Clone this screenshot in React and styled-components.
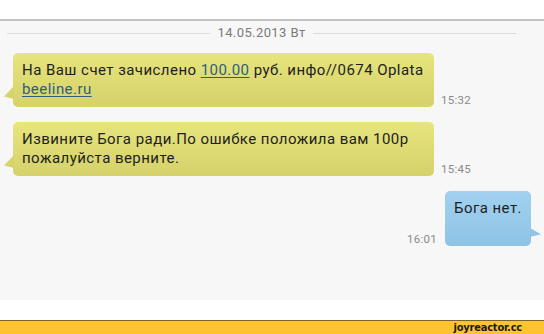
import React from 'react';
import styled, { createGlobalStyle } from 'styled-components';

const GlobalStyle = createGlobalStyle`
  html, body {
    margin: 0;
    padding: 0;
    background: #ffffff;
  }
  body {
    font-family: Roboto, "Liberation Sans", sans-serif;
  }
`;

const Page = styled.div`
  width: 544px;
  height: 334px;
  display: flex;
  flex-direction: column;
  overflow: hidden;
`;

const TopSpace = styled.div`
  height: 19px;
  background: #ffffff;
`;

const Thread = styled.div`
  height: 279px;
  border-top: 2px solid #c2c2c2;
  background: #f7f7f7;
  display: flex;
  flex-direction: column;
`;

const DateRow = styled.div`
  display: flex;
  align-items: center;
  gap: 7px;
  padding: 5px 28px 0 7px;
  height: 14px;
`;

const Rule = styled.div`
  flex: 1;
  height: 1px;
  background: #dcdcdc;
`;

const DateLabel = styled.span`
  font-size: 13px;
  letter-spacing: 0.4px;
  color: #7a7a7a;
  line-height: 14px;
`;

const Row = styled.div`
  display: flex;
  align-items: flex-end;
  justify-content: ${(p) => (p.$out ? 'flex-end' : 'flex-start')};
  padding: ${(p) => (p.$out ? '15px 13px 0 0' : '15px 0 0 13px')};
  &:nth-of-type(2) {
    padding-top: 13px;
  }
`;

const Bubble = styled.div`
  position: relative;
  box-sizing: border-box;
  width: ${(p) => (p.$out ? 'auto' : '421px')};
  min-height: ${(p) => (p.$out ? '55px' : '54px')};
  padding: 8px 9px 8px 9px;
  border-radius: 5px;
  font-size: 15px;
  letter-spacing: 0.45px;
  line-height: 19px;
  color: #1e1e1e;
  background: ${(p) =>
    p.$out
      ? 'linear-gradient(#a2d1ef, #8ec3e6)'
      : 'linear-gradient(#e7e57d, #d5d16b)'};

  &::before {
    content: '';
    position: absolute;
    bottom: ${(p) => (p.$out ? '9px' : '8px')};
    ${(p) => (p.$out ? 'right: -10px;' : 'left: -9px;')}
    width: ${(p) => (p.$out ? '11px' : '10px')};
    height: ${(p) => (p.$out ? '9px' : '13px')};
    background: ${(p) => (p.$out ? '#90c4e7' : '#d7d36d')};
    clip-path: ${(p) =>
      p.$out
        ? 'polygon(0 0, 100% 70%, 0 100%)'
        : 'polygon(100% 0, 0 80%, 100% 100%)'};
  }
`;

const Link = styled.span`
  color: #2d5f7a;
  text-decoration: underline;
  text-underline-offset: 2px;
`;

const Time = styled.span`
  font-size: 11.5px;
  letter-spacing: 0.3px;
  line-height: 12px;
  color: #8a8a8a;
  margin: ${(p) => (p.$out ? '0 8px 0 0' : '0 0 0 7px')};
  padding-bottom: 1px;
`;

const Gap = styled.div`
  height: 20px;
  background: #ffffff;
`;

const Footer = styled.div`
  flex: 1;
  display: flex;
  align-items: center;
  justify-content: flex-end;
  padding-right: 22px;
  background: #fdc331;
  border-top: 1px solid #7d6320;
`;

const Brand = styled.span`
  font-family: "DejaVu Sans Condensed", "DejaVu Sans", sans-serif;
  font-weight: bold;
  font-size: 11px;
  color: #1a1a1a;
  letter-spacing: -0.2px;
`;

const messages = [
  {
    id: 1,
    out: false,
    time: '15:32',
    text: (
      <>
        На Ваш счет зачислено <Link>100.00</Link> руб. инфо//0674 Oplata{' '}
        <Link>beeline.ru</Link>
      </>
    ),
  },
  {
    id: 2,
    out: false,
    time: '15:45',
    text: 'Извините Бога ради.По ошибке положила вам 100р пожалуйста верните.',
  },
  { id: 3, out: true, time: '16:01', text: 'Бога нет.' },
];

const App = () => (
  <Page>
    <GlobalStyle />
    <TopSpace />
    <Thread>
      <DateRow>
        <Rule />
        <DateLabel>14.05.2013 Вт</DateLabel>
        <Rule />
      </DateRow>
      {messages.map((m) => (
        <Row key={m.id} $out={m.out}>
          {m.out && <Time $out>{m.time}</Time>}
          <Bubble $out={m.out}>{m.text}</Bubble>
          {!m.out && <Time>{m.time}</Time>}
        </Row>
      ))}
    </Thread>
    <Gap />
    <Footer>
      <Brand>joyreactor.cc</Brand>
    </Footer>
  </Page>
);

export default App;
